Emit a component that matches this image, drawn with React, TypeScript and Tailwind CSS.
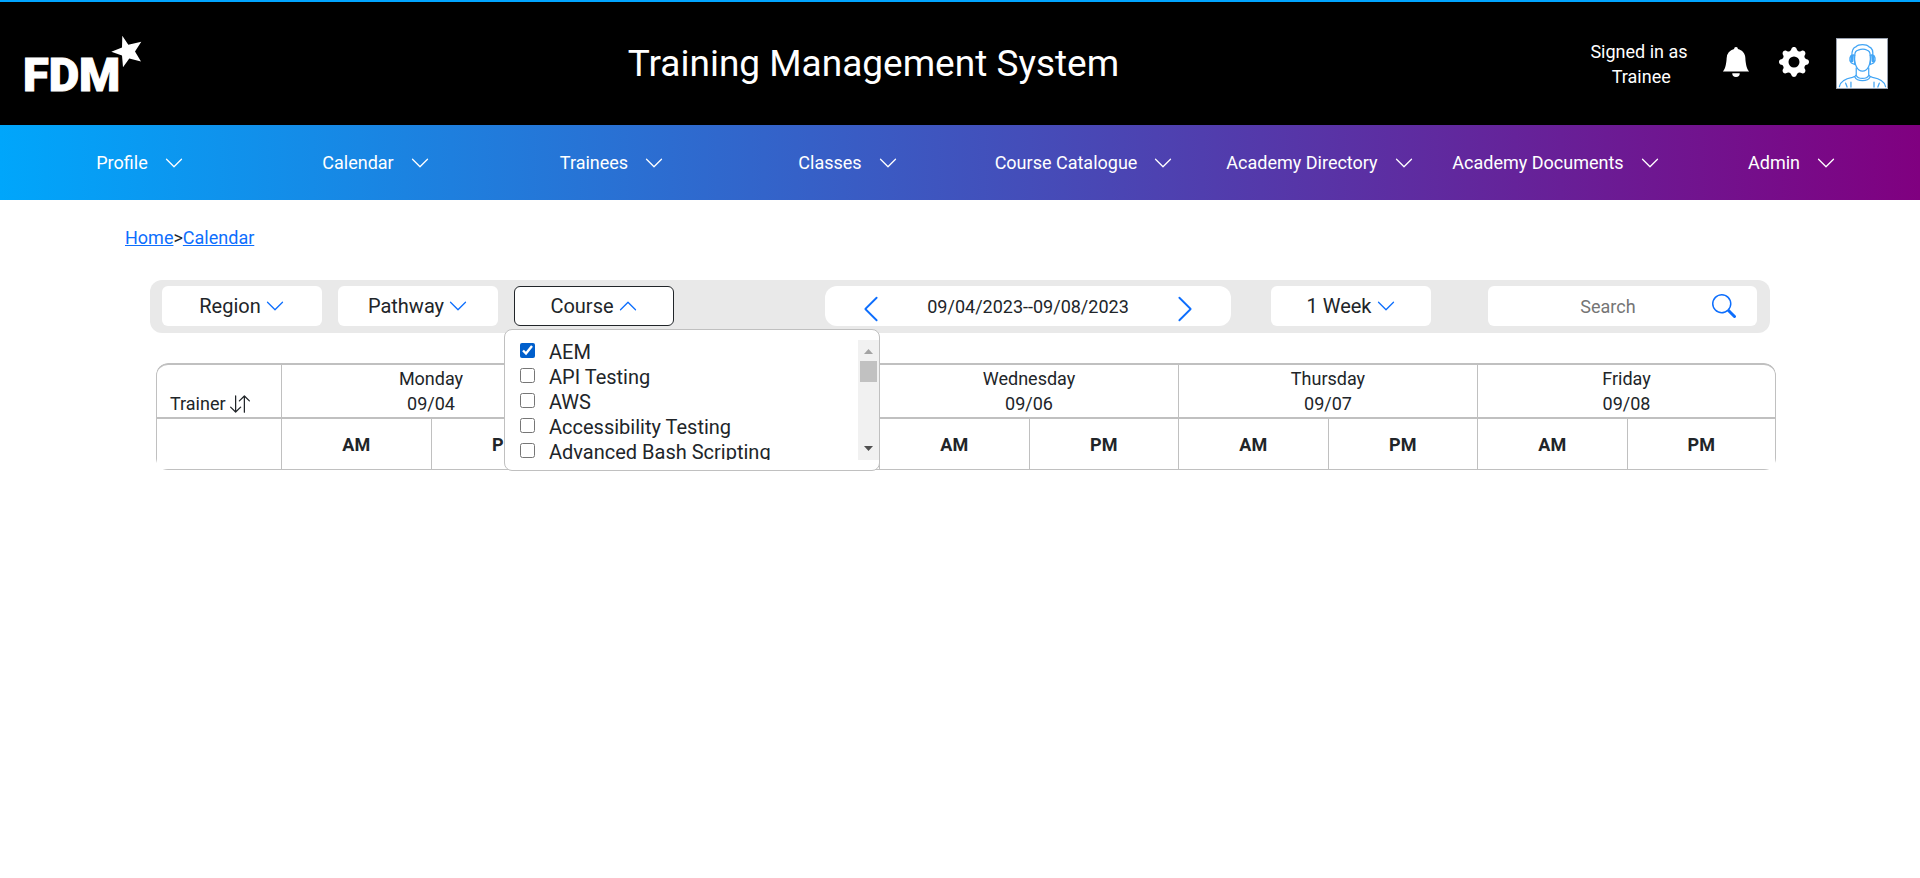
import { useState } from "react";
import {
  BsArrowDownUp,
  BsBellFill,
  BsChevronDown,
  BsChevronLeft,
  BsChevronRight,
  BsChevronUp,
  BsGearFill,
  BsSearch,
} from "react-icons/bs";

const navItems = [
  "Profile",
  "Calendar",
  "Trainees",
  "Classes",
  "Course Catalogue",
  "Academy Directory",
  "Academy Documents",
  "Admin",
];

const courses = ["AEM", "API Testing", "AWS", "Accessibility Testing", "Advanced Bash Scripting"];

const days = [
  { name: "Monday", date: "09/04" },
  { name: "Tuesday", date: "09/05" },
  { name: "Wednesday", date: "09/06" },
  { name: "Thursday", date: "09/07" },
  { name: "Friday", date: "09/08" },
];

function Logo() {
  return (
    <a href="#home" aria-label="FDM home" className="block">
      <svg width="118" height="58" viewBox="0 0 118 58" fill="#fff" className="overflow-visible" aria-hidden="true">
        <text
          x="-1"
          y="56"
          fontFamily="Roboto, sans-serif"
          fontWeight="900"
          fontSize="47"
          stroke="#fff"
          strokeWidth="1"
        >
          FDM
        </text>
        <path d="M98.300 0.800 L104.300 9.800 L117.300 6.800 L111 16.500 L117 26.500 L105.300 23.500 L99 32.200 L98 20.500 L87.300 16.800 L98 12.500 Z" />
      </svg>
    </a>
  );
}

function Avatar() {
  return (
    <svg
      viewBox="0 0 52 51"
      className="h-[51px] w-[52px] border border-gray-400 bg-white"
      fill="none"
      stroke="#42a5f5"
      strokeWidth="1.300"
      strokeLinecap="round"
      role="img"
      aria-label="User avatar"
    >
      <path d="M15.500 18 C15 11 17 9 20 8 C22 5 31 5 33 8 C36 9 38 12 37 18" />
      <path d="M18.500 17 C18.500 14 19.500 12 22 11.500 C25 10.500 29 10.500 31 11.500 C33.500 12 34.500 14 34.500 17" />
      <path d="M18.500 17 C17.500 26 21 33.500 26.500 33.500 C32 33.500 35.500 26 34.500 17" />
      <path d="M17.500 16.500 C13 16.500 12 22 15 25 L18.500 26.500 Z M35.500 16.500 C40 16.500 41 22 38 25 L34.500 26.500 Z" />
      <path d="M15.500 18 V23 M37.500 18 V23" strokeWidth="3" />
      <path d="M20 30 V37 C20 38.500 18 39.500 16 40 C8 41.500 3.500 44 2.500 49.500" />
      <path d="M33 30 V37 C33 38.500 35 39.500 37 40 C45 41.500 49.500 44 50.500 49.500" />
      <path d="M20 38 C22 42 31 42 33 38 M18.500 39.500 C21 44.500 32 44.500 34.500 39.500" />
      <path d="M9 46 L10.500 50 M14.500 45 V50 M44 46 L42.500 50 M38.500 45 V50" />
    </svg>
  );
}

function FilterButton({ label, open = false, onClick }: { label: string; open?: boolean; onClick?: () => void }) {
  return (
    <button
      type="button"
      onClick={onClick}
      aria-expanded={open}
      className={
        open
          ? "flex h-10 w-40 items-center justify-center gap-1 rounded-md border border-[#212529] bg-white text-xl"
          : "flex h-10 w-40 items-center justify-center gap-1 rounded-md bg-white text-xl"
      }
    >
      {label}
      {open ? <BsChevronUp className="size-5 text-[#0d6efd]" /> : <BsChevronDown className="size-5 text-[#0d6efd]" />}
    </button>
  );
}

function CourseMenu() {
  const [selected, setSelected] = useState<string[]>(["AEM"]);
  const toggle = (course: string) =>
    setSelected((now) => (now.includes(course) ? now.filter((c) => c !== course) : [...now, course]));
  return (
    <div className="absolute top-[43px] -left-2.5 z-10 flex h-[142px] w-[376px] rounded-lg border border-[#c0c0c0] bg-white py-2.5">
      <ul className="grow overflow-hidden pl-[15px]">
        {courses.map((course) => (
          <li key={course} className="h-[25px]">
            <label className="flex h-[25px] gap-3.5 text-xl leading-[25px] whitespace-nowrap">
              <input
                type="checkbox"
                checked={selected.includes(course)}
                onChange={() => toggle(course)}
                className="mt-[3px] size-[15px] shrink-0 accent-[#005fcc]"
              />
              {course}
            </label>
          </li>
        ))}
      </ul>
      <div aria-hidden="true" className="flex w-[21px] shrink-0 flex-col items-center bg-[#f1f1f1]">
        <svg viewBox="0 0 21 21" className="h-[21px] w-[21px] shrink-0">
          <path d="M6 14 L10.500 9 L15 14 Z" fill="#a3a3a3" />
        </svg>
        <div className="h-[21px] w-[17px] bg-[#c1c1c1]" />
        <svg viewBox="0 0 21 21" className="mt-auto h-[21px] w-[21px] shrink-0">
          <path d="M6 7 L10.500 12 L15 7 Z" fill="#505050" />
        </svg>
      </div>
    </div>
  );
}

export default function App() {
  const [courseOpen, setCourseOpen] = useState(true);
  return (
    <div className="min-h-screen bg-white font-[Roboto,sans-serif] text-lg leading-[25px] text-[#212529]">
      <header className="grid h-[125px] grid-cols-[134px_1fr_auto] items-center border-t-2 border-[#00a4ff] bg-black pr-8 pl-6 text-white">
        <Logo />
        <h1 className="text-center text-[37px] leading-[50px] font-normal">Training Management System</h1>
        <div className="flex items-center justify-end">
          <p className="mr-8 w-[100px] text-center">
            Signed in as
            <br />
            &nbsp;Trainee
          </p>
          <button type="button" aria-label="Notifications" className="mr-7 pb-1">
            <BsBellFill className="size-[30px]" />
          </button>
          <button type="button" aria-label="Settings" className="mr-[27px] pb-1">
            <BsGearFill className="size-[30px]" />
          </button>
          <Avatar />
        </div>
      </header>

      <nav className="grid h-[75px] grid-cols-8 bg-[linear-gradient(90deg,#00a6fb,#800080)] pr-2.5 pl-[22px] text-white">
        {navItems.map((item) => (
          <button key={item} type="button" className="flex items-center justify-center gap-4 whitespace-nowrap">
            {item}
            <BsChevronDown className="size-5" />
          </button>
        ))}
      </nav>

      <div className="px-[125px] pt-[25px]">
        <a href="#home" className="text-[#0d6efd] underline">
          Home
        </a>
        &gt;
        <a href="#calendar" className="text-[#0d6efd] underline">
          Calendar
        </a>
      </div>

      <main className="px-[150px] pt-[30px]">
        <div className="flex h-[53px] items-start rounded-xl bg-[#e9e9e9] pt-1.5 pr-[13px] pl-3">
          <div className="flex gap-4">
            <FilterButton label="Region" />
            <FilterButton label="Pathway" />
            <div className="relative">
              <FilterButton label="Course" open={courseOpen} onClick={() => setCourseOpen(!courseOpen)} />
              {courseOpen && <CourseMenu />}
            </div>
          </div>
          <div className="mr-10 ml-auto flex h-10 w-[406px] items-center justify-between rounded-xl bg-white px-[31px]">
            <button type="button" aria-label="Previous week" className="pt-1.5">
              <BsChevronLeft className="size-[30px] text-[#0d6efd]" />
            </button>
            <span>09/04/2023--09/08/2023</span>
            <button type="button" aria-label="Next week" className="pt-1.5">
              <BsChevronRight className="size-[30px] text-[#0d6efd]" />
            </button>
          </div>
          <FilterButton label="1 Week" />
          <div className="ml-[57px] flex h-10 w-[269px] items-center rounded-md bg-white pr-[21px]">
            <input
              type="search"
              aria-label="Search"
              placeholder="Search"
              className="w-full min-w-0 pl-8 text-center outline-none placeholder:text-[#757575]"
            />
            <button type="button" aria-label="Submit search">
              <BsSearch className="size-6 text-[#0d6efd]" />
            </button>
          </div>
        </div>

        <div className="mt-[30px] -mr-1.5 ml-1.5 overflow-hidden rounded-xl">
          <table className="w-full table-fixed border-separate border-spacing-0 [&_td]:border-[#c0c0c0] [&_th]:border-[#c0c0c0]">
            <colgroup>
              <col className="w-[125px]" />
              {days.map((day) => [<col key={day.name + "am"} />, <col key={day.name + "pm"} />])}
            </colgroup>
            <thead>
              <tr className="h-14">
                <th scope="col" className="rounded-tl-xl border-y-2 border-l pb-px pl-[13px] text-left align-bottom font-normal">
                  <button type="button" className="flex items-center gap-1">
                    Trainer <BsArrowDownUp className="size-5" />
                  </button>
                </th>
                {days.map((day) => (
                  <th
                    key={day.name}
                    scope="colgroup"
                    colSpan={2}
                    className="border-y-2 border-l font-normal last:rounded-tr-xl last:border-r"
                  >
                    {day.name}
                    <br />
                    {day.date}
                  </th>
                ))}
              </tr>
            </thead>
            <tbody>
              <tr className="h-[51px]">
                <td className="border-b border-l" />
                {days.map((day) => [
                  <th key={day.name + "am"} scope="col" className="border-b border-l font-bold">
                    AM
                  </th>,
                  <th key={day.name + "pm"} scope="col" className="border-b border-l font-bold last:border-r">
                    PM
                  </th>,
                ])}
              </tr>
            </tbody>
          </table>
        </div>
      </main>
    </div>
  );
}
